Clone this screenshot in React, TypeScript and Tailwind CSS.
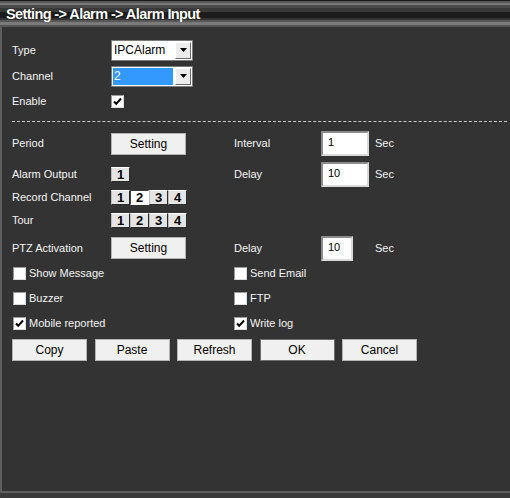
import React from "react";

// ── shared bits ──
const FONT = { fontFamily: '"Liberation Sans", Arial, sans-serif' };

function Select({ value, highlighted }: { value: string; highlighted?: boolean }) {
  return (
    <div className="flex h-[21px] w-[82px] items-center border border-[#7a7a7a] bg-white p-[1px]">
      <div
        className={
          highlighted
            ? "flex h-full flex-1 items-center bg-[#3399ff] pl-[1px] text-[12px] text-white"
            : "flex h-full flex-1 items-center pl-[1px] text-[12px] text-black"
        }
      >
        {value}
      </div>
      <div className="ml-[2px] flex h-full w-[16px] items-center justify-center border border-t-white border-l-white border-r-[#6a6a6a] border-b-[#6a6a6a] bg-[#ececec]">
        <svg width="7" height="4" viewBox="0 0 7 4">
          <path d="M0 0h7L3.5 4z" fill="#000" />
        </svg>
      </div>
    </div>
  );
}

function Checkbox({ checked }: { checked?: boolean }) {
  return (
    <div className="flex h-[13px] w-[13px] shrink-0 items-center justify-center border border-t-[#9a9a9a] border-l-[#9a9a9a] border-r-[#dcdcdc] border-b-[#dcdcdc] bg-white">
      {checked && (
        <svg width="9" height="9" viewBox="0 0 9 9">
          <path d="M1 4.5l2.2 2.3L8 1.5" fill="none" stroke="#000" strokeWidth="2" />
        </svg>
      )}
    </div>
  );
}

function Button({ label, focused }: { label: string; focused?: boolean }) {
  return (
    <div
      className={
        focused
          ? "flex h-[22px] w-[75px] items-center justify-center border border-[#6e6e6e] bg-[#f0f0f0] text-[12px] text-black"
          : "flex h-[22px] w-[75px] items-center justify-center border border-[#b4b4b4] bg-[#f0f0f0] text-[12px] text-black"
      }
    >
      {label}
    </div>
  );
}

function NumBox({ n, pressed }: { n: number; pressed?: boolean }) {
  return (
    <div
      className={
        pressed
          ? "flex h-[15px] w-[19px] items-center justify-center border border-t-[#3c3c3c] border-l-[#3c3c3c] border-r-white border-b-white bg-white text-[13px] font-bold leading-none text-black"
          : "flex h-[15px] w-[19px] items-center justify-center border border-t-white border-l-[#bdbdbd] border-r-[#2a2a2a] border-b-[#2a2a2a] bg-[#e4e4e4] text-[13px] font-bold leading-none text-black"
      }
    >
      {n}
    </div>
  );
}

function TextBox({ value, w }: { value: string; w: string }) {
  return (
    <div
      className={`${w} h-[25px] border-2 border-t-[#8c8c8c] border-l-[#8c8c8c] border-r-[#dadada] border-b-[#dadada] bg-white pl-[5px] pt-[1px] text-[11px] text-black`}
    >
      {value}
    </div>
  );
}

function Label({ children, w = "w-[99px]" }: { children: React.ReactNode; w?: string }) {
  return <div className={`${w} shrink-0 text-[11px] text-[#f4f4f4]`}>{children}</div>;
}

function CheckItem({ label, checked }: { label: string; checked?: boolean }) {
  return (
    <div className="flex items-center gap-[3px]">
      <Checkbox checked={checked} />
      <span className="text-[11px] text-[#f4f4f4]">{label}</span>
    </div>
  );
}

export default function App() {
  return (
    <div className="flex h-[498px] w-[510px] flex-col bg-[#333333]" style={FONT}>
      {/* Title bar */}
      <div className="flex h-[27px] shrink-0 items-center bg-[linear-gradient(to_bottom,#1a1a1a_0,#1a1a1a_1px,#585858_1px,#585858_3px,#7a7a7a_3px,#7a7a7a_5px,#4a4a4a_5px,#4a4a4a_8px,#393939_8px,#393939_12px,#1c1c1c_12px,#1c1c1c_18px,#333_18px,#333_20px,#575757_20px,#575757_22px,#7a7a7a_22px,#7a7a7a_25px,#555_25px,#555_27px)] pl-[6px] pt-[3px]">
        <span className="text-[14.5px] font-bold tracking-[-0.6px] text-white [text-shadow:0_0_1px_#000]">
          Setting -&gt; Alarm -&gt; Alarm Input
        </span>
      </div>

      {/* Body */}
      <div className="flex flex-1 flex-col border-b-2 border-l-2 border-[#5e5e5e] pl-[10px]">
        <div className="mt-[11px] flex h-[24px] items-center">
          <Label>Type</Label>
          <Select value="IPCAlarm" />
        </div>
        <div className="mt-[2px] flex h-[24px] items-center">
          <Label>Channel</Label>
          <Select value="2" highlighted />
        </div>
        <div className="mt-[1px] flex h-[24px] items-center">
          <Label>Enable</Label>
          <Checkbox checked />
        </div>

        <div className="mr-[3px] mt-[8px] border-t border-dashed border-[#c8c8c8]" />

        <div className="mt-[9px] flex h-[25px] items-center">
          <Label>Period</Label>
          <div className="w-[123px] shrink-0">
            <Button label="Setting" />
          </div>
          <Label w="w-[87px]">Interval</Label>
          <TextBox value="1" w="w-[48px]" />
          <span className="ml-[6px] text-[11px] text-[#f4f4f4]">Sec</span>
        </div>
        <div className="mt-[6px] flex h-[25px] items-center">
          <Label>Alarm Output</Label>
          <div className="w-[123px] shrink-0">
            <NumBox n={1} />
          </div>
          <Label w="w-[87px]">Delay</Label>
          <TextBox value="10" w="w-[48px]" />
          <span className="ml-[6px] text-[11px] text-[#f4f4f4]">Sec</span>
        </div>
        <div className="flex h-[20px] items-center">
          <Label>Record Channel</Label>
          <div className="flex">
            <NumBox n={1} />
            <NumBox n={2} pressed />
            <NumBox n={3} />
            <NumBox n={4} />
          </div>
        </div>
        <div className="mt-[3px] flex h-[20px] items-center">
          <Label>Tour</Label>
          <div className="flex">
            <NumBox n={1} />
            <NumBox n={2} />
            <NumBox n={3} />
            <NumBox n={4} />
          </div>
        </div>
        <div className="mt-[6px] flex h-[24px] items-center">
          <Label>PTZ Activation</Label>
          <div className="w-[123px] shrink-0">
            <Button label="Setting" />
          </div>
          <Label w="w-[87px]">Delay</Label>
          <TextBox value="10" w="w-[32px]" />
          <span className="ml-[22px] text-[11px] text-[#f4f4f4]">Sec</span>
        </div>

        {/* Options */}
        <div className="mt-[1px] grid grid-cols-[221px_1fr] pl-[1px]">
          <div className="flex h-[24px] items-center">
            <CheckItem label="Show Message" />
          </div>
          <div className="flex h-[24px] items-center">
            <CheckItem label="Send Email" />
          </div>
          <div className="mt-[1px] flex h-[24px] items-center">
            <CheckItem label="Buzzer" />
          </div>
          <div className="mt-[1px] flex h-[24px] items-center">
            <CheckItem label="FTP" />
          </div>
          <div className="mt-[1px] flex h-[24px] items-center">
            <CheckItem label="Mobile reported" checked />
          </div>
          <div className="mt-[1px] flex h-[24px] items-center">
            <CheckItem label="Write log" checked />
          </div>
        </div>

        <div className="mt-[4px] flex gap-[7.5px]">
          <Button label="Copy" />
          <Button label="Paste" />
          <Button label="Refresh" />
          <Button label="OK" focused />
          <Button label="Cancel" />
        </div>
      </div>
      <div className="h-[5px] shrink-0 bg-[#3a3a3a]" />
    </div>
  );
}
